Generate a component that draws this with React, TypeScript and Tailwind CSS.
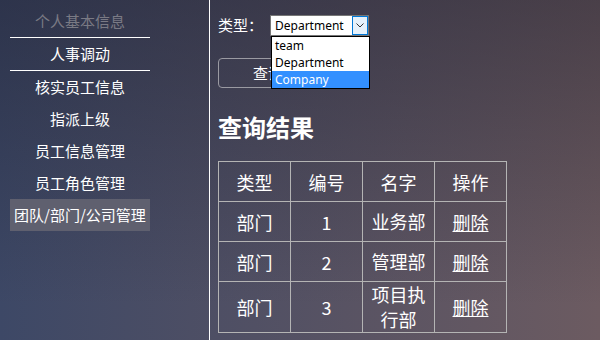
import { useState } from "react"

const menu = ["核实员工信息", "指派上级", "员工信息管理", "员工角色管理", "团队/部门/公司管理"]

const rows = [
    { type: "部门", id: 1, name: "业务部" },
    { type: "部门", id: 2, name: "管理部" },
    { type: "部门", id: 3, name: "项目执行部" },
]

const cjk = "font-['Noto_Sans_CJK_SC','Noto_Sans',sans-serif]"

const SideBar = () => {
    return (
        <div className="w-[210px] h-full border-r border-white shrink-0 pt-[5px]">
            <div className="ml-[10px] w-[140px]">
                <div className="h-[33px] border-b border-white flex items-center justify-center text-[15px] text-[#7a7a84]">个人基本信息</div>
                <div className="h-[33px] border-b border-white flex items-center justify-center text-[15px] text-white">人事调动</div>
                {menu.map((m, i) => (
                    <div
                        key={m}
                        className={
                            i === menu.length - 1
                                ? "h-8 flex items-center justify-center text-[15px] text-white bg-[#5f606f]"
                                : "h-8 flex items-center justify-center text-[15px] text-white"
                        }
                    >
                        {m}
                    </div>
                ))}
            </div>
        </div>
    )
}

const TypeSelect = () => {
    const [value] = useState("Department")
    const options = ["team", "Department", "Company"]
    return (
        <div className="relative ml-[7px]">
            <div className="w-[99px] h-[21px] bg-white border border-[#767676] flex items-center font-['Noto_Sans',sans-serif] text-[12px] text-black">
                <span className="pl-[4px] flex-1 leading-none">{value}</span>
                <div className="w-[16px] h-full bg-[#e5f1fb] border border-[#0078d7] flex items-center justify-center">
                    <svg width="8" height="5" viewBox="0 0 8 5" fill="none" stroke="#333" strokeWidth="1">
                        <path d="M0.5 0.5 L4 4 L7.5 0.5" />
                    </svg>
                </div>
            </div>
            <ul className="absolute left-[1px] top-[21px] w-[99px] bg-white border border-black font-['Noto_Sans',sans-serif] text-[12px] z-10">
                {options.map((o) => (
                    <li
                        key={o}
                        className={
                            o === "Company"
                                ? "h-[17px] leading-[17px] pl-[3px] bg-[#3390ff] text-white"
                                : "h-[17px] leading-[17px] pl-[3px] text-black"
                        }
                    >
                        {o}
                    </li>
                ))}
            </ul>
        </div>
    )
}

const App = () => {
    return (
        <div className={`h-screen w-full flex overflow-hidden ${cjk} bg-[linear-gradient(to_bottom,rgba(22,22,36,0.4),rgba(22,22,36,0)_90%),linear-gradient(to_right,#3d4866,#6c5b61)]`}>
            <SideBar />

            <div className="pl-2 pt-[15px] text-white">
                <div className="flex items-center h-[21px]">
                    <span className="text-[15px]">类型：</span>
                    <TypeSelect />
                </div>

                <button className="mt-[22px] w-[100px] h-[30px] border border-[#9a9aa2] rounded-[4px] text-[15px] text-white">查询</button>

                <h2 className="mt-[23px] h-8 leading-8 text-2xl font-bold">查询结果</h2>

                <table className="mt-[18px] border-collapse table-fixed w-[289px] text-lg text-center">
                    <thead>
                        <tr className="h-10">
                            <th className="w-[72px] border border-[#b4b4b4] font-normal">类型</th>
                            <th className="w-[72px] border border-[#b4b4b4] font-normal">编号</th>
                            <th className="w-[72px] border border-[#b4b4b4] font-normal">名字</th>
                            <th className="w-[72px] border border-[#b4b4b4] font-normal">操作</th>
                        </tr>
                    </thead>
                    <tbody>
                        {rows.map((r) => (
                            <tr key={r.id} className="h-10">
                                <td className="border border-[#b4b4b4]">{r.type}</td>
                                <td className="border border-[#b4b4b4]">{r.id}</td>
                                <td className="border border-[#b4b4b4] px-[8px] leading-[25px]">{r.name}</td>
                                <td className="border border-[#b4b4b4]"><a href="#" className="underline">删除</a></td>
                            </tr>
                        ))}
                    </tbody>
                </table>
            </div>
        </div>
    )
}

export default App
